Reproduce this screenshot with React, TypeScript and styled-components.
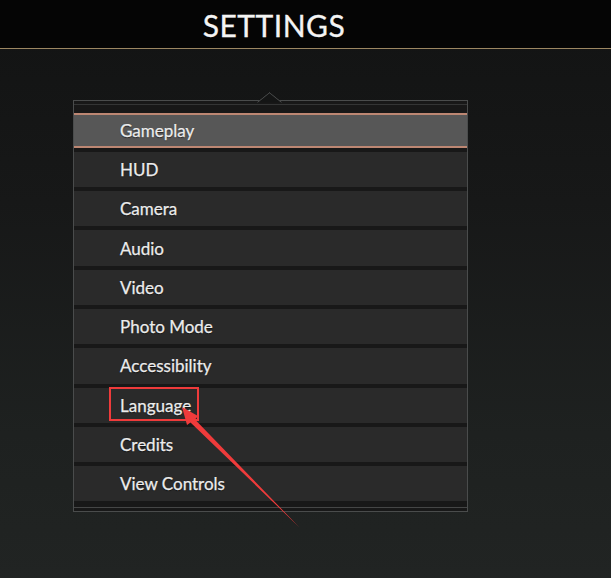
import styled, {createGlobalStyle} from "styled-components";

const items = [
    "Gameplay",
    "HUD",
    "Camera",
    "Audio",
    "Video",
    "Photo Mode",
    "Accessibility",
    "Language",
    "Credits",
    "View Controls",
];

function App() {
    return (
        <Page>
            <GlobalStyle/>
            <Header>
                <TitleSlot>
                    <Title>SETTINGS</Title>
                </TitleSlot>
            </Header>
            <Content>
                <Panel>
                    <Notch/>
                    <TopRule/>
                    <MenuList>
                        {items.map((name) => (
                            <MenuItem key={name} $active={name === "Gameplay"}>
                                <Label $marked={name === "Language"}>{name}</Label>
                            </MenuItem>
                        ))}
                    </MenuList>
                    <BottomRule/>
                </Panel>
            </Content>
            <Pointer viewBox="0 0 611 578" width="611" height="578">
                <polygon
                    points="182,407 198,416 195,419.5 299,527 190.5,422.5 187,425"
                    fill="#ef3b3b"
                />
            </Pointer>
        </Page>
    );
}

const GlobalStyle = createGlobalStyle`
  html, body {
    margin: 0;
    padding: 0;
    background: #1c1e1e;
  }
  body {
    font-family: Lato, "Open Sans", sans-serif;
  }
`;

const Page = styled.div`
  position: relative;
  width: 611px;
  height: 578px;
  overflow: hidden;
  background: linear-gradient(180deg, #121313 0%, #171818 35%, #1e2120 75%, #212423 100%);
`;

const Header = styled.header`
  height: 48px;
  display: flex;
  align-items: center;
  background: #050505;
  border-bottom: 1px solid #9c8762;
`;

const TitleSlot = styled.div`
  width: 394px;
  margin-left: 77px;
  display: flex;
  justify-content: center;
`;

const Title = styled.h1`
  margin: 0;
  padding-top: 2px;
  font-family: Lato, "Open Sans", sans-serif;
  font-weight: 400;
  font-size: 30px;
  letter-spacing: 0.5px;
  color: #f4f4f4;
  -webkit-text-stroke: 0.3px #f4f4f4;
`;

const Content = styled.div`
  padding: 51px 0 0 73px;
`;

const Panel = styled.div`
  position: relative;
  width: 393px;
  border: 1px solid #4a4c4c;
  background: #181818;
`;

const Notch = styled.div`
  position: absolute;
  top: -6px;
  left: 188px;
  width: 14px;
  height: 14px;
  background: #141515;
  border-top: 1px solid #4a4c4c;
  border-left: 1px solid #4a4c4c;
  transform: scaleX(1.25) rotate(45deg);
  clip-path: polygon(0 0, 100% 0, 0 100%);
`;

const TopRule = styled.div`
  height: 1px;
  margin-top: 3px;
  background: #343535;
`;

const MenuList = styled.div`
  display: flex;
  flex-direction: column;
  gap: 4px;
  padding-top: 7.5px;
`;

const MenuItem = styled.div<{ $active?: boolean }>`
  height: 35.3px;
  box-sizing: border-box;
  display: flex;
  align-items: center;
  padding-left: 46px;
  background: ${props => props.$active ? "#575757" : "#2a2a2a"};
  border-top: ${props => props.$active ? "2px solid #bd8773" : "none"};
  border-bottom: ${props => props.$active ? "2px solid #bd8773" : "none"};
`;

const Label = styled.span<{ $marked?: boolean }>`
  position: relative;
  font-size: 17px;
  color: #ececec;
  -webkit-text-stroke: 0.25px #ececec;
  text-shadow: 0 1px 1px rgba(0, 0, 0, 0.6);
  &::after {
    content: "";
    display: ${props => props.$marked ? "block" : "none"};
    position: absolute;
    left: -11px;
    top: -8px;
    width: 86px;
    height: 30px;
    border: 2px solid #ef3b3b;
    -webkit-text-stroke: 0;
  }
`;

const BottomRule = styled.div`
  height: 1px;
  margin-top: 6px;
  margin-bottom: 3px;
  background: #454646;
`;

const Pointer = styled.svg`
  position: absolute;
  left: 0;
  top: 0;
  pointer-events: none;
`;

export default App;
